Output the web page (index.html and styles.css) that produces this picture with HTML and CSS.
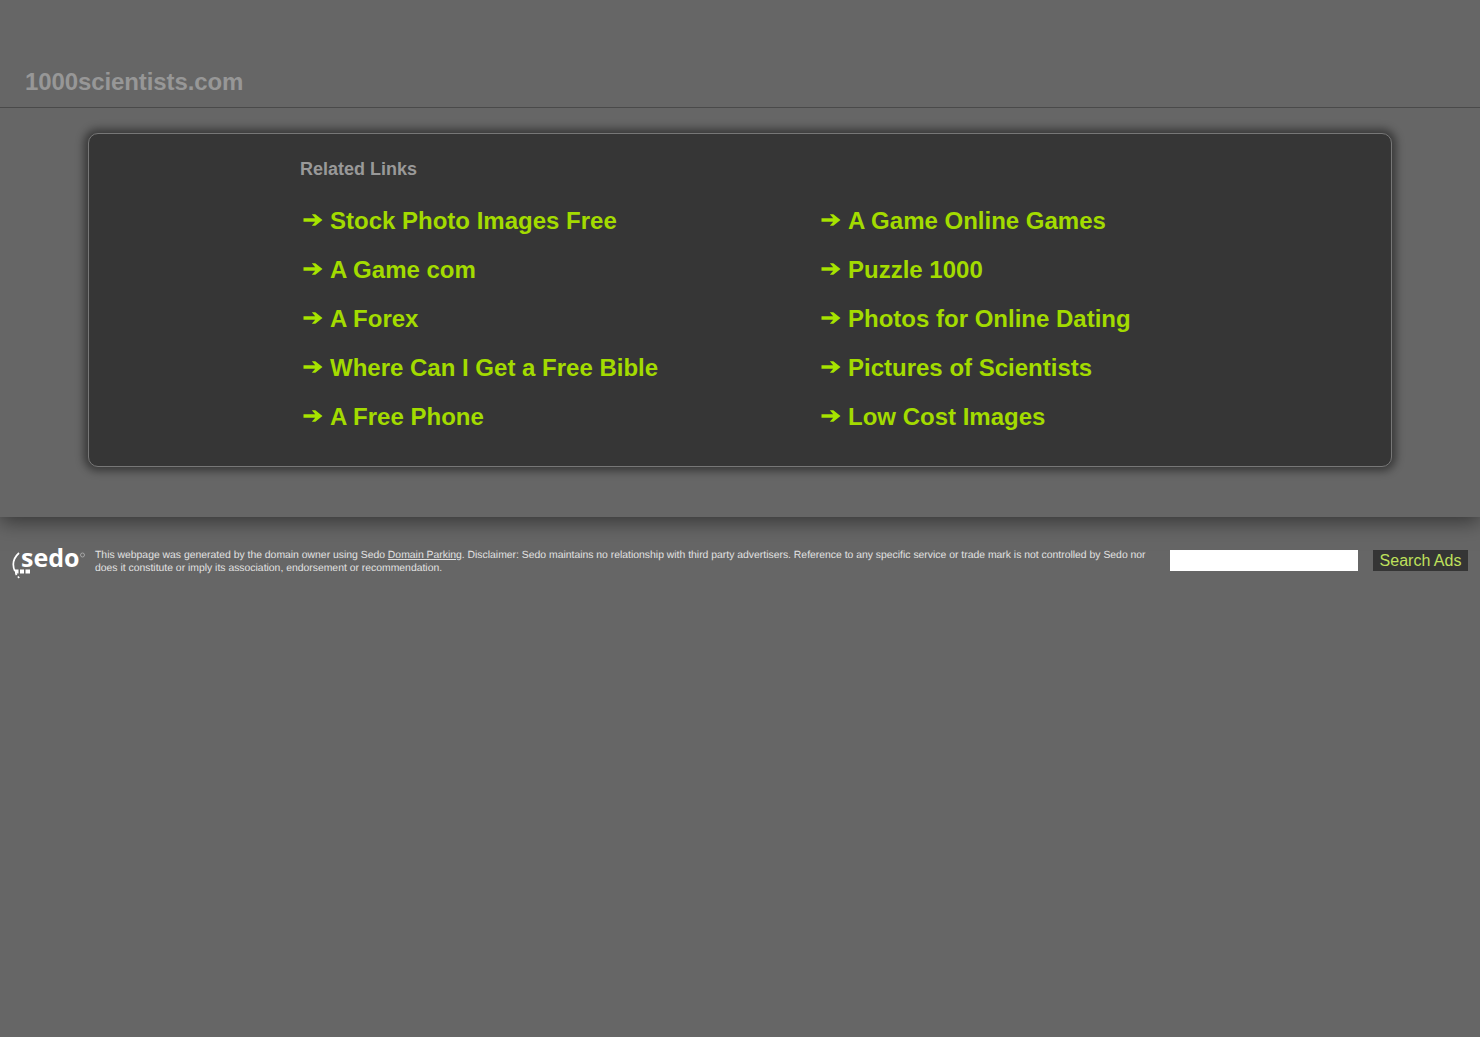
FILE: index.html
```html
<!DOCTYPE html>
<html lang="en">
<head>
<meta charset="utf-8">
<title>1000scientists.com</title>
<link rel="stylesheet" href="styles.css">
</head>
<body>
<svg class="defs" width="0" height="0" aria-hidden="true">
  <symbol id="arrow" viewBox="0 0 20 14"><path d="M0.500 5.300H12.200L8.800 1.300H12.300L19.500 7L12.300 12.700H8.800L12.200 8.700H0.500Z"/></symbol>
</svg>
<div class="top">
  <header class="header"><h1 class="domain">1000scientists.com</h1></header>
  <main class="stage">
    <section class="panel">
      <div class="panel-inner">
        <h2 class="related">Related Links</h2>
        <ul class="links">
          <li><svg class="arrow"><use href="#arrow"/></svg><a href="#">Stock Photo Images Free</a></li>
          <li><svg class="arrow"><use href="#arrow"/></svg><a href="#">A Game Online Games</a></li>
          <li><svg class="arrow"><use href="#arrow"/></svg><a href="#">A Game com</a></li>
          <li><svg class="arrow"><use href="#arrow"/></svg><a href="#">Puzzle 1000</a></li>
          <li><svg class="arrow"><use href="#arrow"/></svg><a href="#">A Forex</a></li>
          <li><svg class="arrow"><use href="#arrow"/></svg><a href="#">Photos for Online Dating</a></li>
          <li><svg class="arrow"><use href="#arrow"/></svg><a href="#">Where Can I Get a Free Bible</a></li>
          <li><svg class="arrow"><use href="#arrow"/></svg><a href="#">Pictures of Scientists</a></li>
          <li><svg class="arrow"><use href="#arrow"/></svg><a href="#">A Free Phone</a></li>
          <li><svg class="arrow"><use href="#arrow"/></svg><a href="#">Low Cost Images</a></li>
        </ul>
      </div>
    </section>
  </main>
</div>
<footer class="footer">
  <svg class="logo" width="74" height="44" viewBox="0 -10 74 44" aria-label="sedo">
    <path d="M7 6 C1.500 11 0 18 3 24.500 C4 27.500 5.500 29.500 7.500 31" fill="none" stroke="#fff" stroke-width="1.700" stroke-dasharray="20 2 2 2 2 2"/>
    <rect x="3" y="22.500" width="3.500" height="4" fill="#fff"/><rect x="8" y="22.500" width="4" height="4" fill="#fff"/><rect x="13.500" y="22.500" width="4.500" height="4" fill="#fff"/>
    <text x="9" y="20" class="logo-text">sedo</text>
    <circle cx="70.500" cy="8" r="2" fill="none" stroke="#aaa" stroke-width="0.900"/>
  </svg>
  <p class="disclaimer">This webpage was generated by the domain owner using Sedo <a href="#">Domain Parking</a>. Disclaimer: Sedo maintains no relationship with third party advertisers. Reference to any specific service or trade mark is not controlled by Sedo nor does it constitute or imply its association, endorsement or recommendation.</p>
  <form class="search">
    <input class="search-input" type="text" aria-label="Search">
    <button class="search-btn" type="button">Search Ads</button>
  </form>
</footer>
</body>
</html>
```
FILE: styles.css
```css
* { box-sizing: border-box; }
html, body { margin: 0; height: 100%; }
body {
  min-height: 1037px;
  background: #666;
  font-family: "Liberation Sans", Arial, sans-serif;
  overflow: hidden;
}
.defs { position: absolute; }
.top {
  height: 517px;
  background: #666;
  box-shadow: 0 4px 20px rgba(0,0,0,0.5);
  position: relative;
  clip-path: inset(0 0 -40px 0);
}
.header {
  height: 108px;
  border-bottom: 1px solid #4a4a4a;
  padding: 68px 0 0 25px;
}
.domain {
  margin: 0;
  font-size: 24px;
  line-height: 28px;
  font-weight: 700;
  color: #979797;
  letter-spacing: -0.1px;
}
.stage { padding: 25px 88px 0; }
.panel {
  height: 334px;
  background: #363636;
  border: 1px solid #777;
  border-radius: 10px;
  box-shadow: 0 0 8px 4px rgba(0,0,0,0.45);
}
.panel-inner { padding: 24px 0 0 211px; }
.related {
  margin: 0 0 16px;
  font-size: 18px;
  line-height: 22px;
  font-weight: 700;
  color: #999;
}
.links {
  list-style: none;
  margin: 0;
  padding: 0 0 0 2px;
  display: grid;
  grid-template-columns: 518px 518px;
  grid-auto-rows: 49px;
}
.links li {
  display: flex;
  align-items: center;
  font-size: 24px;
  font-weight: 700;
}
.arrow {
  width: 20px;
  height: 14px;
  margin: -2px 7px 0 1px;
  flex: none;
  fill: #a6e400;
}
.links a { color: #a3db00; text-decoration: none; }
.footer {
  display: flex;
  align-items: flex-start;
  padding: 30px 12px 0;
}
.logo { flex: none; margin: -10px 9px 0 0; }
.logo-text {
  font-family: "Open Sans", sans-serif;
  font-size: 25px;
  font-weight: 700;
  fill: #fff;
}
.disclaimer {
  margin: 2px 0 0;
  width: 1056px;
  flex: none;
  font-size: 10.4px;
  line-height: 13px;
  text-rendering: geometricPrecision;
  color: #e2e2e2;
}
.disclaimer a { color: #e2e2e2; text-decoration: underline; }
.search { display: flex; margin: 3px 0 0 19px; }
.search-input {
  width: 188px;
  height: 21px;
  border: 0;
  padding: 0;
  background: #fff;
}
.search-btn {
  margin-left: 15px;
  width: 95px;
  height: 21px;
  border: 0;
  padding: 0;
  background: #353535;
  color: #bfe05c;
  font-family: "Liberation Sans", Arial, sans-serif;
  font-size: 16px;
}
```
